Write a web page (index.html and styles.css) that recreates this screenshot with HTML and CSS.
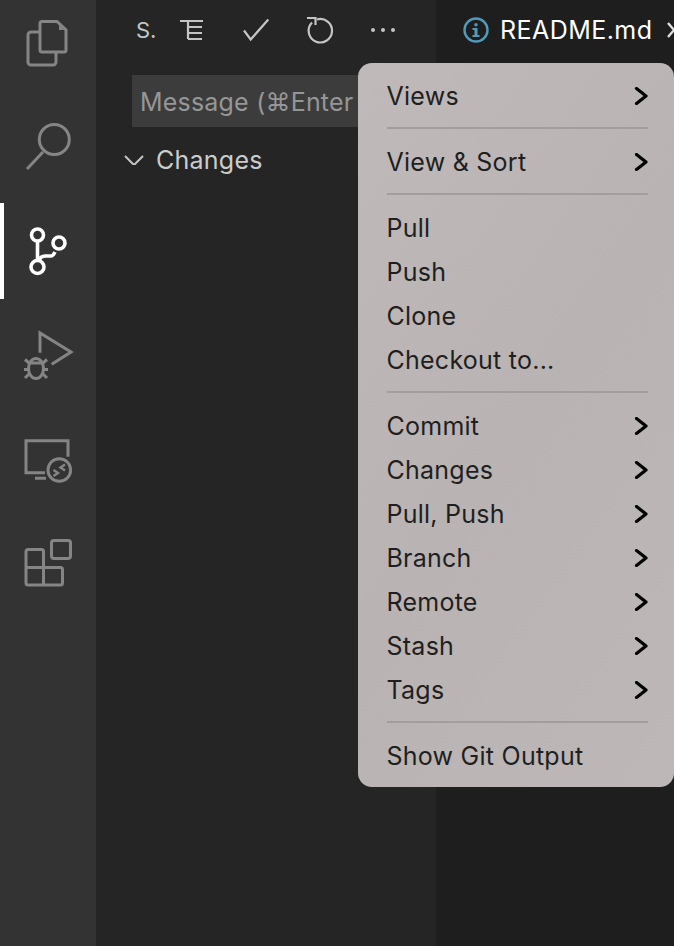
FILE: index.html
```html
<!DOCTYPE html>
<html lang="en">
<head>
    <meta charset="UTF-8" />
    <title>README.md - Source Control</title>
    <link rel="stylesheet" href="styles.css">
</head>
<body>
    <div class="workbench">
        <nav class="activity-bar">
            <div class="activity-item">
                <svg class="activity-icon" viewBox="0 0 48 48">
                    <path d="M18 2.5H33L42 11V31a2 2 0 0 1-2 2H18a2 2 0 0 1-2-2V4.5a2 2 0 0 1 2-2z" />
                    <path class="fill" d="M35 6V11H40z" />
                    <path d="M16 13H7a3 3 0 0 0-3 3V43a3 3 0 0 0 3 3H29a3 3 0 0 0 3-3V33" />
                </svg>
            </div>
            <div class="activity-item">
                <svg class="activity-icon" viewBox="0 0 48 48">
                    <circle cx="30.3" cy="16.5" r="15" />
                    <path d="M19 29L3 46" />
                </svg>
            </div>
            <div class="activity-item active">
                <svg class="activity-icon" viewBox="0 0 48 48">
                    <circle cx="13.5" cy="8" r="6" />
                    <circle cx="13.5" cy="40" r="6.5" />
                    <circle cx="35" cy="16" r="6" />
                    <path d="M13.5 14V33.5M15 33Q17 29 21 29H27Q29 29 31 25" />
                </svg>
            </div>
            <div class="activity-item">
                <svg class="activity-icon" viewBox="0 0 48 48">
                    <path d="M16 21.7V2L47 21L27.7 33.3" />
                    <ellipse cx="12" cy="37.5" rx="7.5" ry="10" />
                    <path d="M5 32H19M1 28.5L5 32M23 28.5L19 32M0 38.5H4.5M24 38.5H19.5M1 47L5 43M23 47L19 43" />
                </svg>
            </div>
            <div class="activity-item">
                <svg class="activity-icon" viewBox="0 0 48 48">
                    <path d="M44 21.7V5.7H2V37.7H21M11 43.3H22" />
                    <circle cx="35.3" cy="35" r="11.3" />
                    <path class="thin" d="M29.5 35L34 38L29.5 41M41 29.5L36.5 32.5L41 35.5" />
                </svg>
            </div>
            <div class="activity-item">
                <svg class="activity-icon" viewBox="0 0 48 48">
                    <rect x="27.5" y="1.5" width="19" height="18" rx="2.5" />
                    <path d="M4 10.5H17.5a2 2 0 0 1 2 2V46M2 28.5H36.5a2 2 0 0 1 2 2V44a2 2 0 0 1-2 2H4a2 2 0 0 1-2-2V12.5a2 2 0 0 1 2-2" />
                </svg>
            </div>
        </nav>

        <aside class="sidebar">
            <div class="sidebar-toolbar">
                <span class="sidebar-title">S.</span>
                <div class="toolbar-actions">
                    <svg class="toolbar-icon" width="24" height="24" viewBox="0 0 24 24">
                        <path d="M0 3H23M8 3V21M8 9H22M8 15H22M8 21H22" />
                    </svg>
                    <svg class="toolbar-icon" width="26" height="24" viewBox="0 0 26 24">
                        <path d="M2 12.5L8.7 21.5L26.3 1.5" />
                    </svg>
                    <svg class="toolbar-icon" width="26" height="26" viewBox="0 0 26 26">
                        <path d="M6 5.5A11.7 11.7 0 1 0 11 2.5M1 1H9.5V8" />
                    </svg>
                    <svg class="toolbar-dots" width="26" height="4" viewBox="0 0 26 4">
                        <circle cx="3" cy="2" r="2" />
                        <circle cx="13" cy="2" r="2" />
                        <circle cx="23" cy="2" r="2" />
                    </svg>
                </div>
            </div>
            <div class="message-box">Message (⌘Enter</div>
            <div class="section-header">
                <svg class="section-chevron" width="20" height="10" viewBox="0 0 20 10">
                    <path d="M1 1L10 10L19 1" />
                </svg>
                <span>Changes</span>
            </div>
        </aside>

        <main class="editor">
            <div class="tab">
                <svg class="tab-icon" width="26" height="26" viewBox="0 0 26 26">
                    <circle class="ring" cx="13" cy="13" r="11.5" />
                    <circle class="dot" cx="13" cy="7.8" r="1.7" />
                    <path class="dot" d="M9.5 11H14.5V18H16.5V20H9.5V18H11.5V13H9.5z" />
                </svg>
                <span class="tab-name">README.md</span>
                <svg class="tab-close" width="14" height="16" viewBox="0 0 14 16">
                    <path d="M1 1L13 15M13 1L1 15" />
                </svg>
            </div>
        </main>
    </div>

    <div class="menu">
        <div class="menu-item">Views<svg class="submenu-arrow" viewBox="0 0 14 18"><path d="M2.5 1.5L12 9L2.5 16.5" /></svg></div>
        <div class="menu-separator"></div>
        <div class="menu-item">View &amp; Sort<svg class="submenu-arrow" viewBox="0 0 14 18"><path d="M2.5 1.5L12 9L2.5 16.5" /></svg></div>
        <div class="menu-separator"></div>
        <div class="menu-item">Pull</div>
        <div class="menu-item">Push</div>
        <div class="menu-item">Clone</div>
        <div class="menu-item">Checkout to...</div>
        <div class="menu-separator"></div>
        <div class="menu-item">Commit<svg class="submenu-arrow" viewBox="0 0 14 18"><path d="M2.5 1.5L12 9L2.5 16.5" /></svg></div>
        <div class="menu-item">Changes<svg class="submenu-arrow" viewBox="0 0 14 18"><path d="M2.5 1.5L12 9L2.5 16.5" /></svg></div>
        <div class="menu-item">Pull, Push<svg class="submenu-arrow" viewBox="0 0 14 18"><path d="M2.5 1.5L12 9L2.5 16.5" /></svg></div>
        <div class="menu-item">Branch<svg class="submenu-arrow" viewBox="0 0 14 18"><path d="M2.5 1.5L12 9L2.5 16.5" /></svg></div>
        <div class="menu-item">Remote<svg class="submenu-arrow" viewBox="0 0 14 18"><path d="M2.5 1.5L12 9L2.5 16.5" /></svg></div>
        <div class="menu-item">Stash<svg class="submenu-arrow" viewBox="0 0 14 18"><path d="M2.5 1.5L12 9L2.5 16.5" /></svg></div>
        <div class="menu-item">Tags<svg class="submenu-arrow" viewBox="0 0 14 18"><path d="M2.5 1.5L12 9L2.5 16.5" /></svg></div>
        <div class="menu-separator"></div>
        <div class="menu-item">Show Git Output</div>
    </div>
</body>
</html>
```

FILE: styles.css
```css
* {
    margin: 0;
    padding: 0;
    box-sizing: border-box;
    font-family: Inter, "Liberation Sans", sans-serif;
}

html, body {
    height: 100%;
    overflow: hidden;
}

body {
    background-color: #1e1e1e;
}

svg {
    display: block;
    flex: none;
}

.workbench {
    display: flex;
    height: 100vh;
}

/* Activity bar */
.activity-bar {
    width: 96px;
    background-color: #333333;
    display: flex;
    flex-direction: column;
    gap: 8px;
    margin-top: -5px;
    flex: none;
}

.activity-item {
    height: 96px;
    display: flex;
    align-items: center;
    justify-content: center;
    border-left: 4px solid transparent;
    padding-right: 4px;
}

.activity-item.active {
    border-left-color: #fff;
}

.activity-icon {
    width: 48px;
    height: 48px;
    overflow: visible;
    fill: none;
    stroke: #858585;
    stroke-width: 3;
}

.activity-icon .fill {
    fill: #858585;
    stroke: none;
}

.activity-icon .thin {
    stroke-width: 2.4;
}

.active .activity-icon {
    stroke: #fff;
    stroke-width: 3.6;
}

/* Sidebar */
.sidebar {
    width: 340px;
    background-color: #252526;
    color: #cccccc;
    flex: none;
    overflow: hidden;
}

.sidebar-toolbar {
    height: 59px;
    display: flex;
    align-items: center;
    padding-left: 40px;
}

.sidebar-title {
    width: 44px;
    font-size: 22px;
    color: #c5c5c5;
}

.toolbar-actions {
    display: flex;
    align-items: center;
    gap: 38px;
}

.toolbar-icon {
    fill: none;
    stroke: #c5c5c5;
    stroke-width: 2.2;
    overflow: visible;
}

.toolbar-dots {
    fill: #c5c5c5;
}

.message-box {
    margin: 16px 0 0 36px;
    height: 52px;
    line-height: 54px;
    padding-left: 8px;
    background-color: #3c3c3c;
    color: #969696;
    font-size: 25px;
    letter-spacing: 0.2px;
    white-space: nowrap;
}

.section-header {
    height: 44px;
    margin-top: 11px;
    padding-left: 28px;
    display: flex;
    align-items: center;
    gap: 12px;
    font-size: 25px;
    letter-spacing: 0.25px;
    color: #cccccc;
}

.section-chevron {
    fill: none;
    stroke: #c5c5c5;
    stroke-width: 2;
}

/* Editor */
.editor {
    flex: 1;
    min-width: 0;
    overflow: hidden;
}

.tab {
    height: 59px;
    display: flex;
    align-items: center;
    padding-left: 27px;
    gap: 11px;
}

.tab-icon .ring {
    fill: none;
    stroke: #519aba;
    stroke-width: 2.4;
}

.tab-icon .dot {
    fill: #519aba;
}

.tab-name {
    font-size: 25px;
    letter-spacing: 0.45px;
    color: #ffffff;
    white-space: nowrap;
}

.tab-close {
    margin-left: 4px;
    fill: none;
    stroke: #e0e0e0;
    stroke-width: 2.4;
}

/* Git overflow menu */
.menu {
    position: absolute;
    top: 63px;
    left: 358px;
    width: 316px;
    height: 724px;
    padding: 11px 26px 9px 28.5px;
    background: linear-gradient(125deg, #bfb9b9, #b9b3b3 50%, #bdb7b7);
    border-radius: 14px;
    color: #1f1f1f;
    font-size: 25px;
    letter-spacing: 0.25px;
}

.menu-item {
    height: 44px;
    display: flex;
    align-items: center;
    justify-content: space-between;
}

.menu-separator {
    height: 2px;
    margin: 9px 0 11px;
    background-color: #a39d9d;
}

.submenu-arrow {
    width: 14px;
    height: 18px;
    fill: none;
    stroke: #000;
    stroke-width: 3.2;
    stroke-linecap: round;
    stroke-linejoin: round;
}
```
